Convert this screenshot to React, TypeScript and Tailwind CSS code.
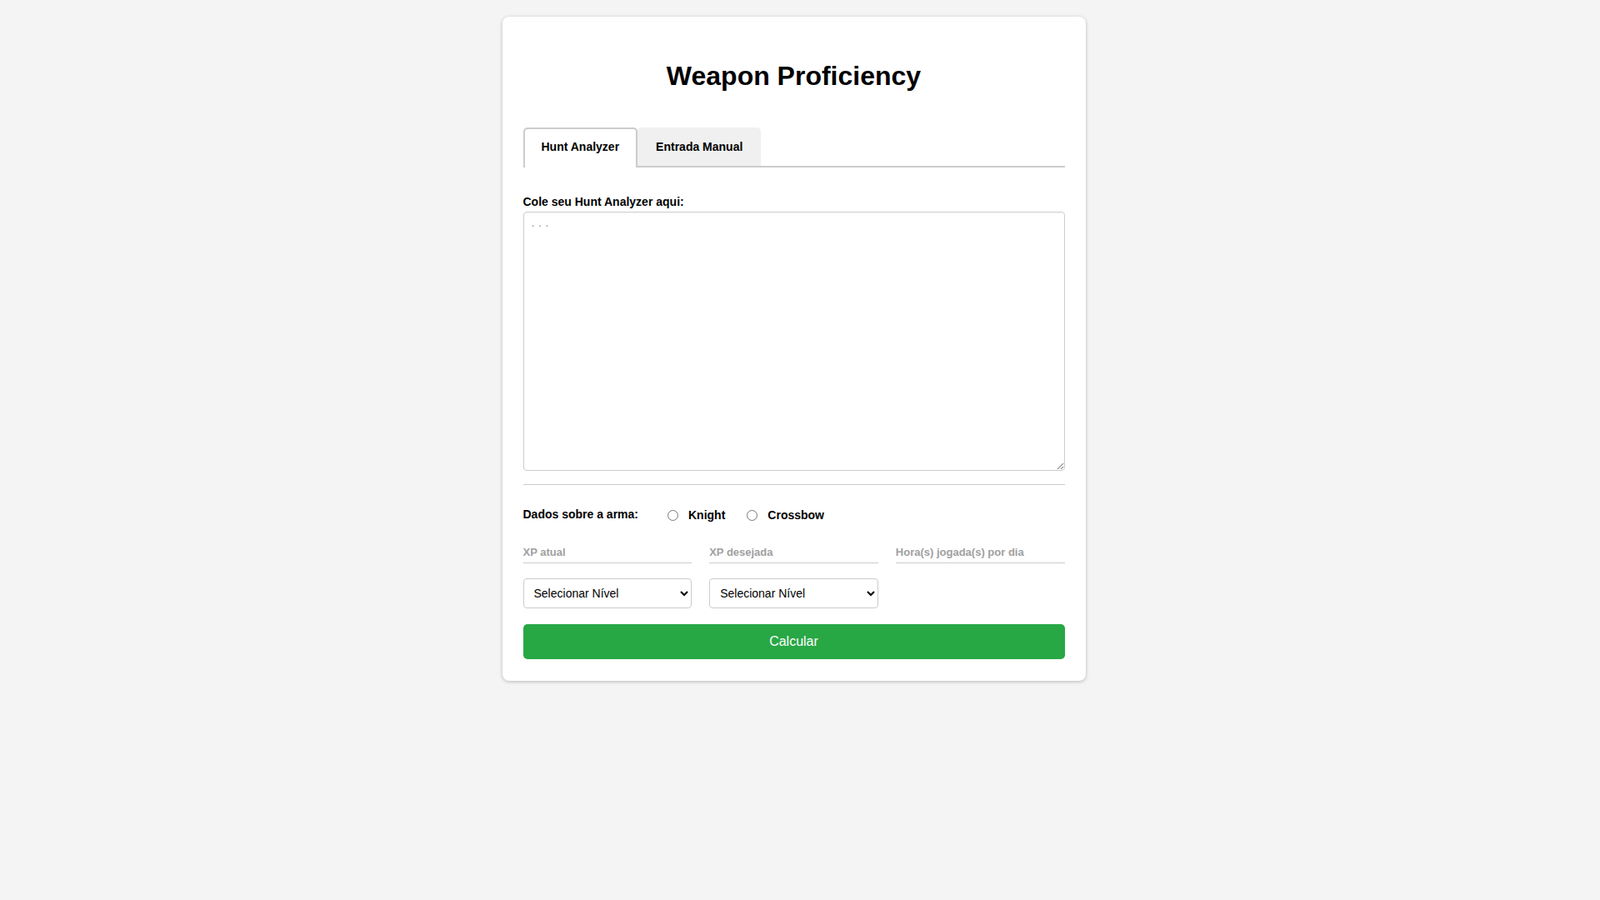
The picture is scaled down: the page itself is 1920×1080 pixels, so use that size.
import { useState } from "react";

const font = { fontFamily: '"Liberation Sans", Arial, sans-serif' };

export default function App() {
  const [tab, setTab] = useState<"hunt" | "manual">("hunt");

  const tabClass = (active: boolean) =>
    active
      ? "mb-[-2px] rounded-t-[5px] border-2 border-b-0 border-[#cccccc] bg-white px-[20px] pt-[13px] pb-[17px] text-[14px] font-bold leading-[16px] text-black"
      : "rounded-t-[5px] border-2 border-b-0 border-transparent bg-[#f0f0f0] px-[20px] pt-[13px] pb-[15px] text-[14px] font-bold leading-[16px] text-black";

  return (
    <div
      className="min-h-[calc(100vh+40px)] bg-[#f4f4f4] pt-[20px] pr-[15px] text-black"
      style={font}
    >
      <div className="mx-auto w-[700px] rounded-[8px] bg-white px-[25px] pt-[25px] pb-[26px] shadow-[0_1px_4px_rgba(0,0,0,0.25)]">
        <h1 className="mt-[28px] mb-[43px] text-center text-[32px] font-bold leading-[37px]">
          Weapon Proficiency
        </h1>

        <div className="flex items-end border-b-2 border-[#cccccc]">
          <button
            type="button"
            onClick={() => setTab("hunt")}
            className={tabClass(tab === "hunt")}
          >
            Hunt Analyzer
          </button>
          <button
            type="button"
            onClick={() => setTab("manual")}
            className={tabClass(tab === "manual")}
          >
            Entrada Manual
          </button>
        </div>

        <div className="pt-[33px]">
          <label className="block text-[14px] font-bold leading-[16px]">
            Cole seu Hunt Analyzer aqui:
          </label>
          <textarea
            placeholder=". . ."
            className="mt-[4px] block h-[311px] w-full rounded-[4px] border border-[#cccccc] px-[9px] pt-[4px] pb-[10px] text-[15px] leading-[16px] outline-none placeholder:text-[#999999]"
          />
        </div>

        <hr className="mt-[16px] border-t border-[#cccccc]" />

        <div className="mt-[28px] flex items-center text-[14px] font-bold leading-[16px]">
          <span className="-mt-[2px] mr-[35px]">Dados sobre a arma:</span>
          <label className="mr-[26px] flex items-center">
            <input type="radio" name="arma" className="mr-[12px] h-[13px] w-[13px]" />
            Knight
          </label>
          <label className="flex items-center">
            <input type="radio" name="arma" className="mr-[12px] h-[13px] w-[13px]" />
            Crossbow
          </label>
        </div>

        <div className="mt-[24px] grid grid-cols-3 gap-x-[21px]">
          <input
            placeholder="XP atual"
            className="border-b border-[#cccccc] py-[5px] text-[13px] font-bold leading-[15px] outline-none placeholder:text-[#a0a0a0]"
          />
          <input
            placeholder="XP desejada"
            className="border-b border-[#cccccc] py-[5px] text-[13px] font-bold leading-[15px] outline-none placeholder:text-[#a0a0a0]"
          />
          <input
            placeholder="Hora(s) jogada(s) por dia"
            className="border-b border-[#cccccc] py-[5px] text-[13px] font-bold leading-[15px] outline-none placeholder:text-[#a0a0a0]"
          />

          <select className="mt-[18px] h-[36px] rounded-[4px] border border-[#cccccc] bg-white px-[8px] text-[14px] outline-none">
            <option>Selecionar Nível</option>
          </select>
          <select className="mt-[18px] h-[36px] rounded-[4px] border border-[#cccccc] bg-white px-[8px] text-[14px] outline-none">
            <option>Selecionar Nível</option>
          </select>
        </div>

        <button
          type="button"
          className="mt-[19px] block h-[42px] w-full rounded-[5px] bg-[#28a745] text-[16px] text-white"
        >
          Calcular
        </button>
      </div>
    </div>
  );
}
